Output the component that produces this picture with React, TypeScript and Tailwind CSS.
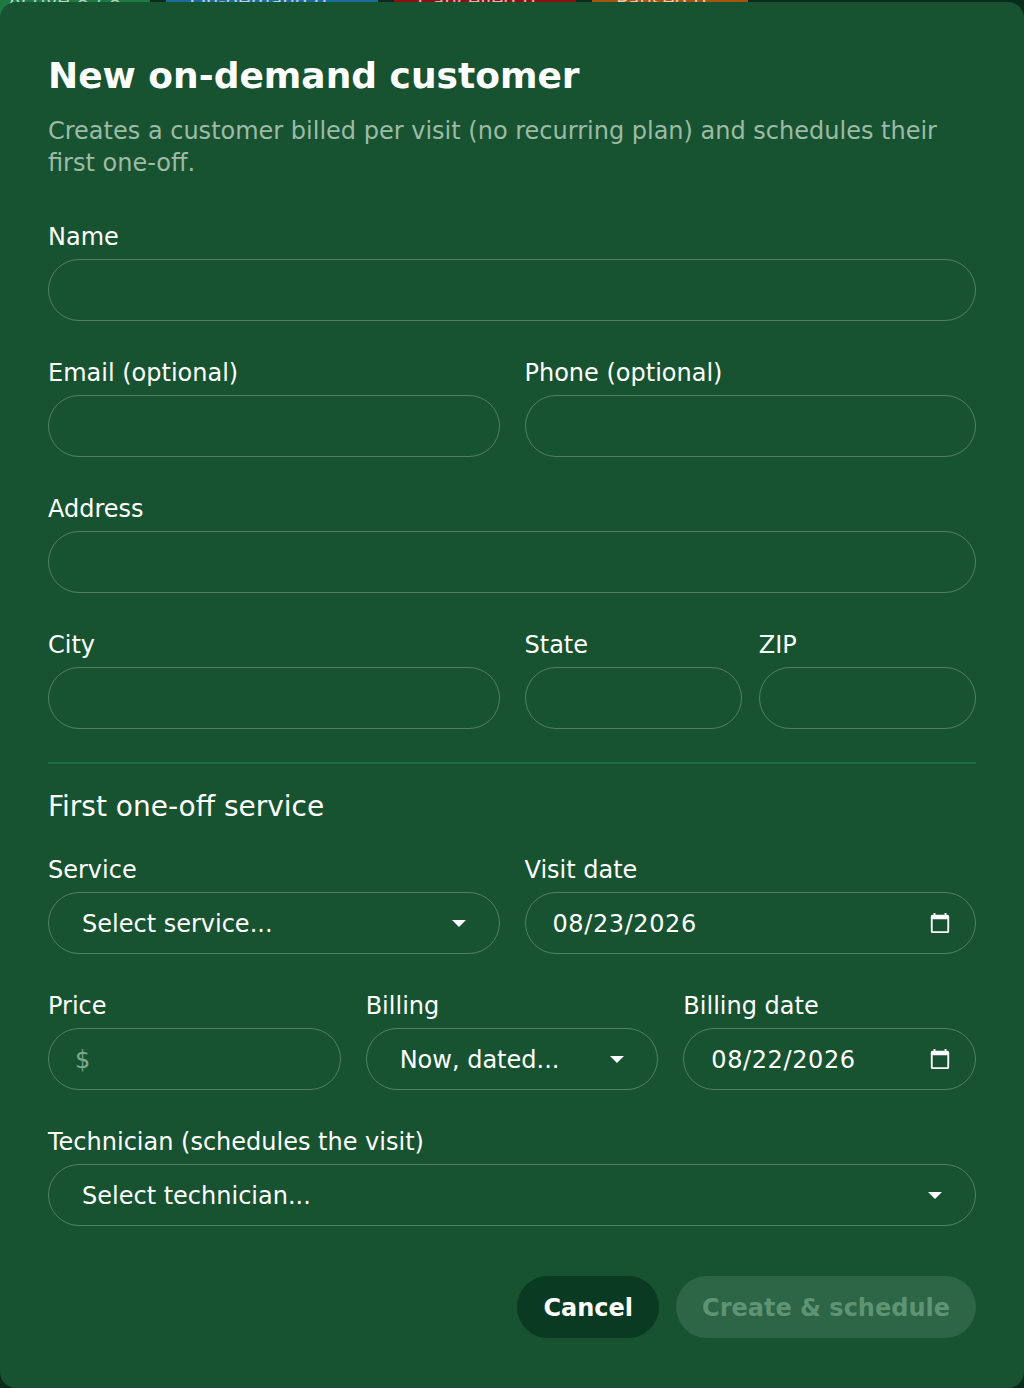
import React from "react";

const font = { fontFamily: '"DejaVu Sans", "Noto Sans", sans-serif' };

function Label({ children }: { children: React.ReactNode }) {
  return <label className="block pt-[2px] text-[24px] leading-[29px] text-white">{children}</label>;
}

function TextBox({ placeholder }: { placeholder?: string }) {
  return (
    <input
      placeholder={placeholder}
      className="mt-[7px] block h-[62px] w-full rounded-full border-[1.5px] border-white/25 bg-transparent px-[26px] pt-[2px] text-[24px] text-white outline-none placeholder:text-[#7ea78c]"
    />
  );
}

function Caret() {
  return (
    <svg width="14" height="7" viewBox="0 0 14 7" className="shrink-0">
      <path d="M0 0h14L7 7z" fill="#ffffff" />
    </svg>
  );
}

function SelectBox({ value }: { value: string }) {
  return (
    <div className="mt-[7px] flex h-[62px] w-full items-center justify-between rounded-full border-[1.5px] border-white/25 pl-[33px] pr-[33px] text-[24px] text-white">
      <span className="truncate pt-[2px]">{value}</span>
      <Caret />
    </div>
  );
}

function CalendarIcon() {
  return (
    <svg width="22" height="22" viewBox="0 0 24 24" className="shrink-0">
      <path
        d="M20 3h-1V1h-2v2H7V1H5v2H4c-1.1 0-2 .9-2 2v16c0 1.1.9 2 2 2h16c1.1 0 2-.9 2-2V5c0-1.1-.9-2-2-2zm0 18H4V8h16v13z"
        fill="#ffffff"
      />
    </svg>
  );
}

function DateBox({ value }: { value: string }) {
  return (
    <div className="mt-[7px] flex h-[62px] w-full items-center justify-between rounded-full border-[1.5px] border-white/25 pl-[27px] pr-[24px] text-[24px] tracking-[0.6px] text-white">
      <span className="pt-[2px]">{value}</span>
      <CalendarIcon />
    </div>
  );
}

export default function App() {
  return (
    <div className="relative h-[1388px] w-full overflow-hidden bg-[#0a2c1b]" style={font}>
      {/* page behind the dialog */}
      <div className="-mt-[14px] flex h-[34px] gap-4 text-[20px] leading-[30px] text-white/70">
        <div className="w-[150px] rounded-md bg-[#1d7a41] px-2">Active 8 / 8</div>
        <div className="w-[212px] rounded-md bg-[#1b6d9b] px-6">On-demand 0</div>
        <div className="w-[182px] rounded-md bg-[#8c1212] px-6">Cancelled 0</div>
        <div className="w-[156px] rounded-md bg-[#a3560f] px-6">Paused 0</div>
      </div>

      {/* dialog */}
      <div className="absolute inset-x-0 top-[2px] bottom-0 rounded-2xl bg-[#175331] px-12 pt-[52px] pb-[49px]">
        <h2 className="text-[36px] leading-[44px] font-bold text-white">New on-demand customer</h2>
        <p className="mt-[17px] text-[24px] leading-[32px] text-[#9dbba6]">
          Creates a customer billed per visit (no recurring plan) and schedules their first one-off.
        </p>

        <div className="mt-[42px] flex flex-col gap-[36px]">
          <div>
            <Label>Name</Label>
            <TextBox />
          </div>
          <div className="grid grid-cols-2 gap-x-[25px]">
            <div>
              <Label>Email (optional)</Label>
              <TextBox />
            </div>
            <div>
              <Label>Phone (optional)</Label>
              <TextBox />
            </div>
          </div>
          <div>
            <Label>Address</Label>
            <TextBox />
          </div>
          <div className="grid grid-cols-2 gap-x-[25px]">
            <div>
              <Label>City</Label>
              <TextBox />
            </div>
            <div className="grid grid-cols-2 gap-x-[17px]">
              <div>
                <Label>State</Label>
                <TextBox />
              </div>
              <div>
                <Label>ZIP</Label>
                <TextBox />
              </div>
            </div>
          </div>
        </div>

        <div className="mt-[33px] h-[2px] bg-[#246b41]" />

        <h3 className="mt-[25px] text-[28px] leading-[36px] text-white">First one-off service</h3>

        <div className="mt-[29px] flex flex-col gap-[36px]">
          <div className="grid grid-cols-2 gap-x-[25px]">
            <div>
              <Label>Service</Label>
              <SelectBox value="Select service..." />
            </div>
            <div>
              <Label>Visit date</Label>
              <DateBox value="08/23/2026" />
            </div>
          </div>
          <div className="grid grid-cols-3 gap-x-[25px]">
            <div>
              <Label>Price</Label>
              <TextBox placeholder="$" />
            </div>
            <div>
              <Label>Billing</Label>
              <SelectBox value="Now, dated..." />
            </div>
            <div>
              <Label>Billing date</Label>
              <DateBox value="08/22/2026" />
            </div>
          </div>
          <div>
            <Label>Technician (schedules the visit)</Label>
            <SelectBox value="Select technician..." />
          </div>
        </div>

        <div className="mt-[50px] flex justify-end gap-[17px]">
          <button className="h-[62px] rounded-full bg-[#0a3a21] px-[26px] pt-[2px] text-[24px] font-bold text-white">
            Cancel
          </button>
          <button
            disabled
            className="h-[62px] rounded-full bg-[#2c6646] px-[26px] pt-[2px] text-[24px] font-bold text-[#5e9473]"
          >
            Create &amp; schedule
          </button>
        </div>
      </div>
    </div>
  );
}
